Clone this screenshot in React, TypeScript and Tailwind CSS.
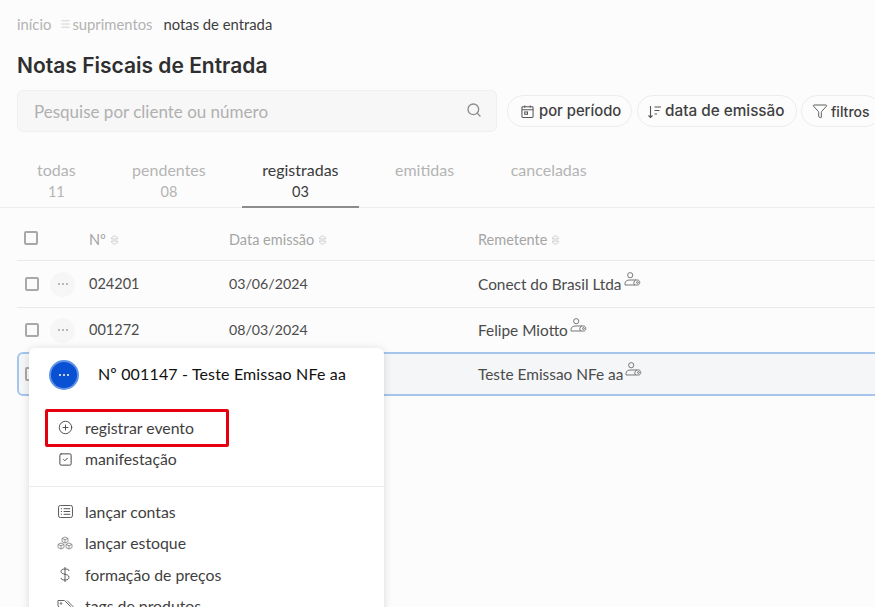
import { Search, Funnel, CirclePlus, SquareCheck, Menu } from "lucide-react";
import type { ReactNode } from "react";

const body = "font-['Lato','Noto_Sans',sans-serif]";

function Sort() {
  return (
    <svg viewBox="0 0 8 12" className="ml-[4px] h-[12px] w-[9px] text-[#cdcdcd]" fill="none" stroke="currentColor" strokeWidth="1">
      <path d="M1 5 C1 1 7 1 7 5 Z" />
      <path d="M1 7 C1 11 7 11 7 7 Z" />
    </svg>
  );
}

function UserTag() {
  return (
    <svg viewBox="0 0 17 15" className="ml-[2px] mb-[9px] h-[15px] w-[17px] text-[#6a6a6a]" fill="none" stroke="currentColor" strokeWidth="0.9">
      <circle cx="6.2" cy="3.2" r="2.6" />
      <path d="M1 13 V11.5 C1 9 3 8 6 8 H12" />
      <path d="M1 13 H10.5" />
      <path d="M10.5 13 C9.3 11.5 9.8 9 11.5 8 H13.5 C16.5 8 16.5 13 13.5 13 Z" />
      <circle cx="13.5" cy="10.5" r="0.9" />
    </svg>
  );
}

function Check() {
  return <span className="block h-[14px] w-[14px] rounded-[2px] border-2 border-[#a8a8a8] bg-[#fbfbfb]" />;
}

function Dots({ blue = false }: { blue?: boolean }) {
  const c = blue ? "bg-white" : "bg-[#a4a4a4]";
  return (
    <span className="flex gap-[2px]">
      <i className={`block h-[2px] w-[2px] rounded-full ${c}`} />
      <i className={`block h-[2px] w-[2px] rounded-full ${c}`} />
      <i className={`block h-[2px] w-[2px] rounded-full ${c}`} />
    </span>
  );
}

function Pill({ icon, label, className }: { icon: ReactNode; label: string; className: string }) {
  return (
    <div className={`flex h-[32px] shrink-0 items-center gap-[3px] rounded-full border border-[#ececec] font-medium text-[#3f3f3f] font-['Inter',sans-serif] ${className}`}>
      {icon}
      <span>{label}</span>
    </div>
  );
}

function Tab({ title, count, active = false }: { title: string; count?: string; active?: boolean }) {
  return (
    <div className={`-mb-px flex flex-col items-center border-b-2 px-5 pb-[4px] ${active ? "border-[#8c8c8c] text-[#3a3a3a]" : "border-transparent text-[#b4b4b4]"}`}>
      <span className="text-[16px] leading-[21px]">{title}</span>
      <span className="mt-px h-[21px] text-[14.5px] leading-[21px]">{count}</span>
    </div>
  );
}

function Row({ no, date, sender, cls }: { no: string; date: string; sender: string; cls: string }) {
  return (
    <div className={`grid grid-cols-[58px_140px_249px_1fr] items-center leading-5 text-[#4b4b4b] ${cls}`}>
      <div className="flex items-center pl-2">
        <Check />
        <span className="ml-[11px] flex h-[25px] w-[25px] items-center justify-center rounded-full bg-[#f6f6f6]"><Dots /></span>
      </div>
      <span className="pl-[14px] text-[14.5px]">{no}</span>
      <span className="pl-[14px] text-[14.2px]">{date}</span>
      <span className="flex items-center pl-[14px] text-[15.4px]">{sender}<UserTag /></span>
    </div>
  );
}

function Item({ icon, label }: { icon: ReactNode; label: string }) {
  return (
    <div className="flex h-[31.5px] items-center text-[15.8px] text-[#3f3f3f]">
      <span className="flex w-[56px] justify-center pl-[16px] text-[#4a4a4a]">{icon}</span>
      <span>{label}</span>
    </div>
  );
}

function ListBox() {
  return (
    <svg viewBox="0 0 16 14" className="h-[13px] w-[15px]" fill="none" stroke="currentColor" strokeWidth="1">
      <rect x="0.5" y="0.5" width="15" height="13" rx="2" />
      <path d="M3 4h1.2M3 7h1.2M3 10h1.2M6 4h7M6 7h7M6 10h7" />
    </svg>
  );
}

function Cubes() {
  return (
    <svg viewBox="0 0 16 14" className="h-[14px] w-[16px] text-[#8a8a8a]" fill="none" stroke="currentColor" strokeWidth="0.9">
      <path d="M8 1 L11 2.4 V5.6 L8 7 L5 5.6 V2.4 Z M5 2.4 L8 3.8 L11 2.4 M8 3.8 V7" />
      <path d="M4 7 L7 8.4 V11.6 L4 13 L1 11.6 V8.4 Z M1 8.4 L4 9.8 L7 8.4 M4 9.8 V13" />
      <path d="M12 7 L15 8.4 V11.6 L12 13 L9 11.6 V8.4 Z M9 8.4 L12 9.8 L15 8.4 M12 9.8 V13" />
    </svg>
  );
}

function Dollar() {
  return (
    <svg viewBox="0 0 10 17" className="h-[17px] w-[10px]" fill="none" stroke="currentColor" strokeWidth="0.9">
      <path d="M5 1 V16 M9 5 C9 3.4 7.5 3 5 3 C2.5 3 1 3.8 1 5.5 C1 9 9 7.5 9 11.2 C9 13 7.5 14 5 14 C2.5 14 1 13.4 1 11.8" />
    </svg>
  );
}

function TagPair() {
  return (
    <svg viewBox="0 0 17 15" className="h-[15px] w-[17px] text-[#666]" fill="none" stroke="currentColor" strokeWidth="1">
      <path d="M1 1.5 H7.5 L13.5 7.5 L8 13.5 L1 7 Z" />
      <path d="M10 1.5 L16 7.5 L11 13" />
      <circle cx="4" cy="4.5" r="0.8" />
    </svg>
  );
}

export default function App() {
  return (
    <div className={`relative h-[607px] w-[875px] overflow-hidden bg-[#fcfcfc] ${body}`}>
      <div className="px-[17px] pt-[15px]">
        <nav className="flex h-[18px] items-center text-[14.8px] text-[#b2b2b2]">
          <span>início</span>
          <Menu className="ml-[9px] mr-[1px] h-[12px] w-[11px]" strokeWidth={1.2} />
          <span>suprimentos</span>
          <span className="ml-[11px] text-[#3d3d3d]">notas de entrada</span>
        </nav>
        <h1 className="mt-[18px] text-[21px] leading-[30px] font-semibold text-[#2f2f2f] font-['Inter',sans-serif]">Notas Fiscais de Entrada</h1>
        <div className="mt-[9px] flex items-center">
          <div className="flex h-[42px] w-[480px] shrink-0 items-center justify-between rounded-[6px] border border-[#f0f0f0] bg-[#f7f7f7] pl-[16px] pr-[14px]">
            <span className="translate-y-px text-[17px] text-[#b0b0b0]">Pesquise por cliente ou número</span>
            <Search className="-translate-y-px h-[16px] w-[16px] text-[#8c8c8c]" strokeWidth={2} />
          </div>
          <Pill className="ml-[10px] w-[125px] pl-[13px] pt-px text-[14.8px]" label="por período" icon={
            <svg viewBox="0 0 14 15" className="mr-[2px] h-[15px] w-[13px] text-[#555]" fill="none" stroke="currentColor" strokeWidth="1.1">
              <rect x="1" y="2.5" width="12" height="11.5" rx="1" /><path d="M1 5.5h12M4 1v2.5M10 1v2.5" /><rect x="4" y="8" width="3" height="2.5" />
            </svg>
          } />
          <Pill className="ml-[5px] w-[160px] pl-[9px] pt-px text-[15.3px]" label="data de emissão" icon={
            <svg viewBox="0 0 15 14" className="h-[14px] w-[15px] text-[#555]" fill="none" stroke="currentColor" strokeWidth="1.1">
              <path d="M3.5 1v11.5M1.5 10.5l2 2 2-2M7.5 2h6.5M7.5 5.5h5M7.5 9h2.5" />
            </svg>
          } />
          <Pill className="ml-[4px] pl-[10px] pr-[10px] text-[14px]" label="filtros" icon={<Funnel className="h-[16px] w-[16px] text-[#555]" strokeWidth={1.4} />} />
        </div>
      </div>

      <div className="mt-[27px] flex gap-[16.5px] border-b border-[#ececec] pl-[17px]">
        <Tab title="todas" count="11" />
        <Tab title="pendentes" count="08" />
        <Tab title="registradas" count="03" active />
        <Tab title="emitidas" />
        <Tab title="canceladas" />
      </div>

      <div className="pl-[17px]">
        <div className="mt-[12px] grid h-[41px] grid-cols-[58px_140px_249px_1fr] items-center border-b border-[#e9e9e9] text-[14.5px] text-[#a5a5a5]">
          <div className="pl-[7px] -translate-y-[2px]"><Check /></div>
          <span className="flex items-center pl-[14px]">Nº<Sort /></span>
          <span className="flex items-center pl-[14px]">Data emissão<Sort /></span>
          <span className="flex items-center pl-[14px]">Remetente<Sort /></span>
        </div>
        <Row no="024201" date="03/06/2024" sender="Conect do Brasil Ltda" cls="h-[47px] border-b border-[#e9e9e9]" />
        <Row no="001272" date="08/03/2024" sender="Felipe Miotto" cls="h-[44px]" />
        <div className="h-[44px] w-[900px] rounded-[6px] border-2 border-[#a5c5ec] bg-[#f5f6f8]">
          <Row no="" date="" sender="Teste Emissao NFe aa" cls="-ml-[2px] h-[40px]" />
        </div>
      </div>

      <div className="absolute left-[29px] top-[348px] h-[300px] w-[355px] rounded-[6px] bg-white shadow-[0_1px_8px_rgba(0,0,0,0.14)]">
        <div className="flex h-[54px] items-center pl-[20px]">
          <span className="flex h-[30px] w-[30px] items-center justify-center rounded-full border-2 border-[#5e93e6] bg-[#0a50d2]"><Dots blue /></span>
          <span className="ml-[19px] -translate-y-px text-[16px] font-normal tracking-[0.15px] text-[#111]">Nº 001147 - Teste Emissao NFe aa</span>
        </div>
        <div className="pt-[10px]">
          <Item icon={<CirclePlus className="h-[15px] w-[15px]" strokeWidth={1.5} />} label="registrar evento" />
          <Item icon={<SquareCheck className="h-[15px] w-[15px]" strokeWidth={1.6} />} label="manifestação" />
        </div>
        <div className="mt-[11px] mb-[9px] border-t border-[#ececec]" />
        <Item icon={<ListBox />} label="lançar contas" />
        <Item icon={<Cubes />} label="lançar estoque" />
        <Item icon={<Dollar />} label="formação de preços" />
        <Item icon={<TagPair />} label="tags de produtos" />
      </div>
      <div className="absolute left-[45px] top-[409px] h-[38px] w-[184px] rounded-[2px] border-[3px] border-[#e6000f]" />
    </div>
  );
}
